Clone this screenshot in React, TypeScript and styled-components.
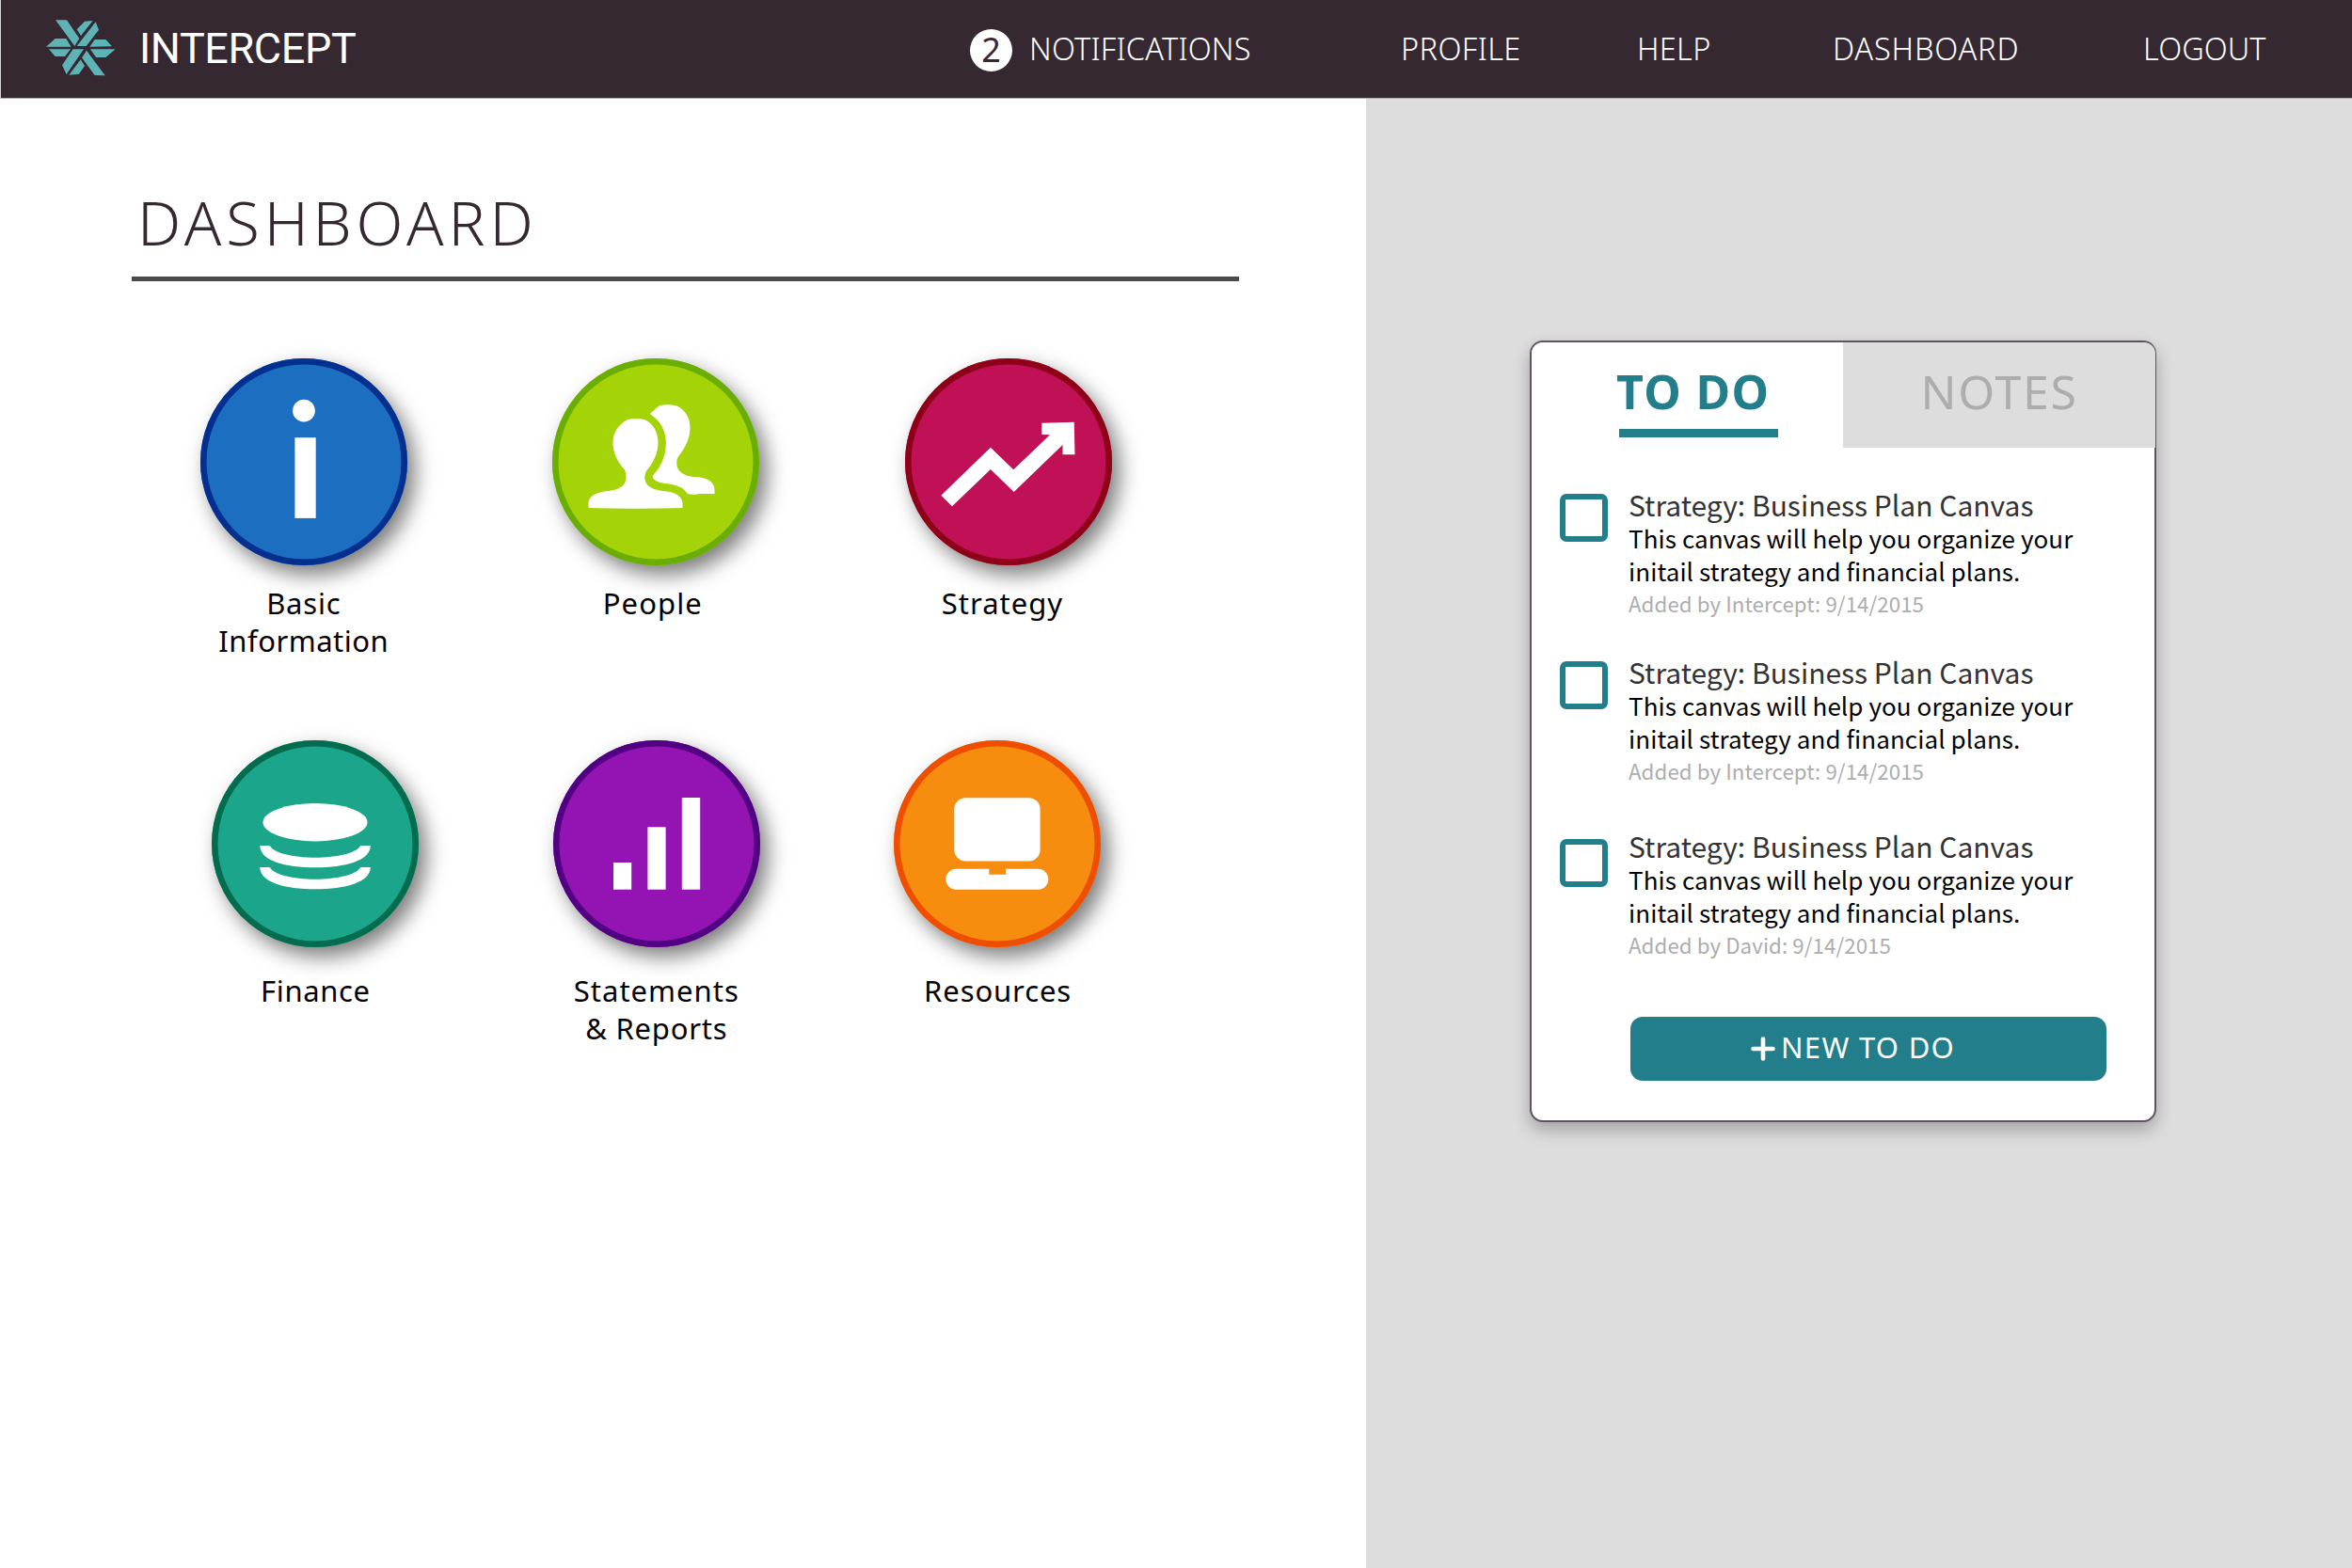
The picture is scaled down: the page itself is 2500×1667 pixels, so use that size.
import React from "react";
import styled, { createGlobalStyle } from "styled-components";

const ubuntuLike = `"Noto Sans", "Open Sans", sans-serif`;
const sourceLike = `"Noto Sans CJK JP", "Noto Sans", sans-serif`;
const plum = "#352831";
const teal = "#217e8a";

const GlobalStyle = createGlobalStyle`
  * { box-sizing: border-box; }
  body { margin: 0; background: #fff; font-family: ${ubuntuLike}; }
  h1, h3, p { margin: 0; font-weight: 400; }
`;

const Page = styled.div`
  display: flex;
  flex-direction: column;
  width: 2500px;
  height: 1667px;
  overflow: hidden;
`;

const Header = styled.header`
  display: flex;
  align-items: center;
  height: 105px;
  flex: none;
  background: ${plum};
  border-left: 1px solid #d5d2d4;
  border-bottom: 1px solid #b5aeb4;
  color: #fff;
`;

const Brand = styled.a`
  display: flex;
  align-items: center;
  width: 1030px;
  padding-left: 39px;
`;

const LogoMark = styled.svg`
  width: 100px;
  height: 80px;
  margin-top: -4px;
  fill: #5db3b6;
`;

const BrandName = styled.span`
  margin-left: 8px;
  font: 400 45px/50px Roboto, sans-serif;
  letter-spacing: -0.4px;
`;

const Nav = styled.nav`
  display: flex;
  align-items: center;
  height: 100%;
`;

const CountBadge = styled.span`
  width: 45px;
  height: 45px;
  margin: 3px 18px 0 0;
  border-radius: 50%;
  background: #fff;
  color: ${plum};
  font-size: 36px;
  line-height: 44px;
  text-align: center;
`;

const NavLink = styled.a<{ $width: number; $tracking: number }>`
  width: ${(p) => p.$width}px;
  font-size: 32.5px;
  font-weight: 300;
  line-height: 44px;
  white-space: nowrap;
  letter-spacing: ${(p) => p.$tracking}px;
`;

const Body = styled.div`
  display: flex;
  flex: 1;
`;

const Main = styled.main`
  width: 1452px;
  padding: 86px 135px 0 140px;
`;

const Title = styled.h1`
  height: 108px;
  padding-left: 6px;
  border-bottom: 5px solid #4b494a;
  color: ${plum};
  font-size: 65px;
  font-weight: 300;
  line-height: 90px;
  letter-spacing: 4.9px;
`;

const TileRow = styled.div<{ $top: number; $left: number; $gap: number }>`
  display: flex;
  gap: ${(p) => p.$gap}px;
  margin: ${(p) => p.$top}px 0 0 ${(p) => p.$left}px;
  height: 324px;
`;

const Tile = styled.a`
  display: flex;
  flex-direction: column;
  align-items: center;
  width: 220px;
`;

const Disc = styled.span<{ $fill: string; $ring: string }>`
  display: flex;
  flex: none;
  width: 220px;
  height: 220px;
  border-radius: 50%;
  background: ${(p) => p.$fill};
  box-shadow: inset 0 0 0 6.5px ${(p) => p.$ring}, 8px 10px 22px rgba(0, 0, 0, 0.52);
`;

const Glyph = styled.svg`
  width: 220px;
  height: 220px;
  fill: #fff;
`;

const TileLabel = styled.span<{ $top: number; $shift: number }>`
  margin: ${(p) => p.$top}px 0 0 ${(p) => p.$shift * 2}px;
  color: #000;
  font-size: 31px;
  line-height: 40px;
  text-align: center;
  white-space: nowrap;
`;

const LabelLine = styled.span<{ $tracking: number }>`
  display: block;
  letter-spacing: ${(p) => p.$tracking}px;
`;

const Sidebar = styled.aside`
  flex: 1;
  padding: 257px 0 0 174px;
  background: #ddd;
`;

const Card = styled.section`
  width: 666px;
  height: 831px;
  border: 2px solid #5f5264;
  border-radius: 14px;
  background: #fff;
  box-shadow: 0 8px 18px rgba(0, 0, 0, 0.27);
`;

const Tabs = styled.div`
  display: flex;
  height: 112px;
`;

const Tab = styled.button<{ $active?: boolean }>`
  display: flex;
  flex-direction: column;
  align-items: flex-start;
  width: ${(p) => (p.$active ? 331 : 332)}px;
  margin-right: ${(p) => (p.$active ? 0 : -1)}px;
  padding: 16px 0 0 ${(p) => (p.$active ? 90 : 82.5)}px;
  border: 0;
  border-radius: ${(p) => (p.$active ? "12px 0 0 0" : "0 12px 0 0")};
  background: ${(p) => (p.$active ? "#fff" : "#ddd")};
  color: ${(p) => (p.$active ? teal : "#adadad")};
  font-family: ${ubuntuLike};
  font-size: 50px;
  font-weight: ${(p) => (p.$active ? 700 : 400)};
  line-height: 72px;
  letter-spacing: ${(p) => (p.$active ? 1.4 : 1.7)}px;
  white-space: nowrap;
`;

const TabUnderline = styled.span`
  width: 169px;
  height: 9px;
  margin: 4px 0 0 3px;
  background: ${teal};
`;

const TodoItem = styled.article<{ $top: number }>`
  display: flex;
  height: 144px;
  margin-top: ${(p) => p.$top}px;
  padding-left: 30px;
  font-family: ${sourceLike};
  white-space: nowrap;
`;

const CheckBox = styled.span<{ $drop: number }>`
  flex: none;
  width: 51px;
  height: 51px;
  margin: ${(p) => p.$drop}px 22px 0 0;
  border: 6px solid ${teal};
  border-radius: 7px;
`;

const TodoBody = styled.div`
  margin-top: -5px;
`;

const TodoTitle = styled.h3`
  color: #333;
  font-size: 30px;
  line-height: 36px;
`;

const TodoText = styled.p`
  color: #000;
  font-size: 26px;
  line-height: 35px;
  letter-spacing: 0.08px;
`;

const TodoMeta = styled.p`
  color: #adadad;
  font-size: 22.3px;
  line-height: 34px;
  letter-spacing: 0.06px;
`;

const NewButton = styled.button`
  display: flex;
  align-items: center;
  width: 506px;
  height: 68px;
  margin: 51px 0 0 105px;
  padding: 0 0 4px 128px;
  border: 0;
  border-radius: 13px;
  background: ${teal};
  color: #fff;
  font-family: ${ubuntuLike};
  font-size: 31px;
  line-height: 40px;
  letter-spacing: 1.3px;
`;

const PlusIcon = styled.svg`
  width: 26px;
  height: 26px;
  margin: 4px 6px 0 0;
  stroke: #fff;
  stroke-width: 4.6;
  stroke-linecap: round;
`;

const navLinks = [
  { text: "NOTIFICATIONS", width: 395, tracking: 0.2 },
  { text: "PROFILE", width: 251, tracking: 0.4 },
  { text: "HELP", width: 208, tracking: 0.3 },
  { text: "DASHBOARD", width: 330, tracking: 0.85 },
  { text: "LOGOUT", width: 140, tracking: 0.05 },
];

const InfoGlyph = () => (
  <Glyph viewBox="0 0 220 220">
    <circle cx="110" cy="55.7" r="11.9" />
    <rect x="100.4" y="84.2" width="22.3" height="85.7" />
  </Glyph>
);

const PeopleGlyph = () => (
  <Glyph viewBox="-34.5 -57 660 660">
    <path d="M206 138Q231 132 259 138C288 151 303 178 303 212C303 243 289 273 269 298C258 311 258 332 268 345C278 357 294 362 313 365C348 367 381 377 381 407V420Q231 425 81 420V407C81 377 114 368 149 365C170 362 184 357 194 345C203 332 203 313 196 298C174 273 159 243 159 212C159 177 179 152 206 138Z" />
    <path d="M277 120L306 94Q333 88 361 94C390 107 405 132 405 166C405 196 391 226 371 252C359 266 360 287 370 300C380 314 400 319 418 321C452 321 483 332 483 364V375H435Q420 379 397 375C386 357 369 349 343 344C316 342 300 338 289 328C284 322 285 318 290 312C317 282 328 247 328 212C328 174 311 142 277 120Z" />
  </Glyph>
);

const StrategyGlyph = () => (
  <Glyph viewBox="0 0 220 220">
    <path d="M38.3 145.7L90.9 94.7L115.3 118.3L154 81.3L145.2 81V68.7L179.7 67.7L180.5 102.3H167.5V92L115.7 142L90.9 118L50 157.3Z" />
  </Glyph>
);

const FinanceGlyph = () => (
  <Glyph viewBox="0 0 220 220">
    <ellipse cx="110" cy="87.2" rx="55.5" ry="20.2" />
    {[0, 23].map((dy) => (
      <path
        key={dy}
        transform={`translate(0 ${dy})`}
        d="M51.3 112H61.8C66 120 86 124.7 110 124.7S154 120 158.2 112H168.8C168.8 128 142 135.3 110 135.3S51.3 128 51.3 112Z"
      />
    ))}
  </Glyph>
);

const ReportsGlyph = () => (
  <Glyph viewBox="0 0 220 220">
    <rect x="64" y="130" width="19.2" height="28.7" />
    <rect x="100.4" y="92.3" width="19.2" height="66.4" />
    <rect x="136.8" y="61" width="19.4" height="97.7" />
  </Glyph>
);

const ResourcesGlyph = () => (
  <Glyph viewBox="0 0 220 220">
    <rect x="64.3" y="61.3" width="91.3" height="67.3" rx="12" />
    <path d="M66.3 136.7H101.3V142.7H119V136.7H153.3A11 11 0 0 1 153.3 158.7H66.3A11 11 0 0 1 66.3 136.7Z" />
  </Glyph>
);

type TileData = {
  lines: [string, number][];
  fill: string;
  ring: string;
  shift: number;
  glyph: React.ReactNode;
};

const topRow: TileData[] = [
  { lines: [["Basic", 0.8], ["Information", 0.5]], fill: "#1b6ec0", ring: "#032f90", shift: 0.3, glyph: <InfoGlyph /> },
  { lines: [["People", 1.1]], fill: "#a4d307", ring: "#69ae05", shift: -3.2, glyph: <PeopleGlyph /> },
  { lines: [["Strategy", 1]], fill: "#c01157", ring: "#8e0018", shift: -6, glyph: <StrategyGlyph /> },
];

const bottomRow: TileData[] = [
  { lines: [["Finance", 0.6]], fill: "#1ba68c", ring: "#036c4e", shift: 0.3, glyph: <FinanceGlyph /> },
  { lines: [["Statements", 1], ["& Reports", 0.75]], fill: "#9414b3", ring: "#520083", shift: 0.3, glyph: <ReportsGlyph /> },
  { lines: [["Resources", 0.9]], fill: "#f68d0f", ring: "#ef4e00", shift: 0.6, glyph: <ResourcesGlyph /> },
];

const todos = [
  { by: "Intercept", top: 47, drop: 2 },
  { by: "Intercept", top: 34, drop: 2 },
  { by: "David", top: 41, drop: 6 },
];

const Tiles = ({ items, labelTop }: { items: TileData[]; labelTop: number }) => (
  <>
    {items.map((t) => (
      <Tile key={t.lines[0][0]}>
        <Disc $fill={t.fill} $ring={t.ring}>
          {t.glyph}
        </Disc>
        <TileLabel $top={labelTop} $shift={t.shift}>
          {t.lines.map(([text, tracking]) => (
            <LabelLine key={text} $tracking={tracking}>
              {text}
            </LabelLine>
          ))}
        </TileLabel>
      </Tile>
    ))}
  </>
);

export default function App() {
  return (
    <Page>
      <GlobalStyle />
      <Header>
        <Brand>
          <LogoMark viewBox="0 0 300 240">
            <polygon points="57,34 93,34 133,93 118,117" />
            <polygon points="150,38 176,36 138,84 125,64" />
            <polygon points="185,40 195,65 155,117 125,117" />
            <polygon points="27,119 56,93 91,93 107,119" />
            <polygon points="182,96 217,96 237,118 166,119" />
            <polygon points="168,127 248,127 217,153 186,153" />
            <polygon points="36,127 105,127 87,150 56,150" />
            <polygon points="113,127 147,127 92,207 78,178" />
            <polygon points="100,209 132,206 150,180 137,160" />
            <polygon points="156,131 215,211 182,210 141,154" />
          </LogoMark>
          <BrandName>INTERCEPT</BrandName>
        </Brand>
        <Nav>
          <CountBadge>2</CountBadge>
          {navLinks.map((l) => (
            <NavLink key={l.text} $width={l.width} $tracking={l.tracking}>
              {l.text}
            </NavLink>
          ))}
        </Nav>
      </Header>
      <Body>
        <Main>
          <Title>DASHBOARD</Title>
          <TileRow $top={82} $left={72.5} $gap={154.5}>
            <Tiles items={topRow} labelTop={20} />
          </TileRow>
          <TileRow $top={82} $left={85} $gap={142.5}>
            <Tiles items={bottomRow} labelTop={26} />
          </TileRow>
        </Main>
        <Sidebar>
          <Card>
            <Tabs>
              <Tab $active>
                TO DO
                <TabUnderline />
              </Tab>
              <Tab>NOTES</Tab>
            </Tabs>
            {todos.map((t, i) => (
              <TodoItem key={i} $top={t.top}>
                <CheckBox $drop={t.drop} />
                <TodoBody>
                  <TodoTitle>Strategy: Business Plan Canvas</TodoTitle>
                  <TodoText>
                    This canvas will help you organize your
                    <br />
                    initail strategy and financial plans.
                  </TodoText>
                  <TodoMeta>Added by {t.by}: 9/14/2015</TodoMeta>
                </TodoBody>
              </TodoItem>
            ))}
            <NewButton>
              <PlusIcon viewBox="0 0 26 26">
                <path d="M13 2.5V23.5M2.5 13H23.5" />
              </PlusIcon>
              NEW TO DO
            </NewButton>
          </Card>
        </Sidebar>
      </Body>
    </Page>
  );
}
